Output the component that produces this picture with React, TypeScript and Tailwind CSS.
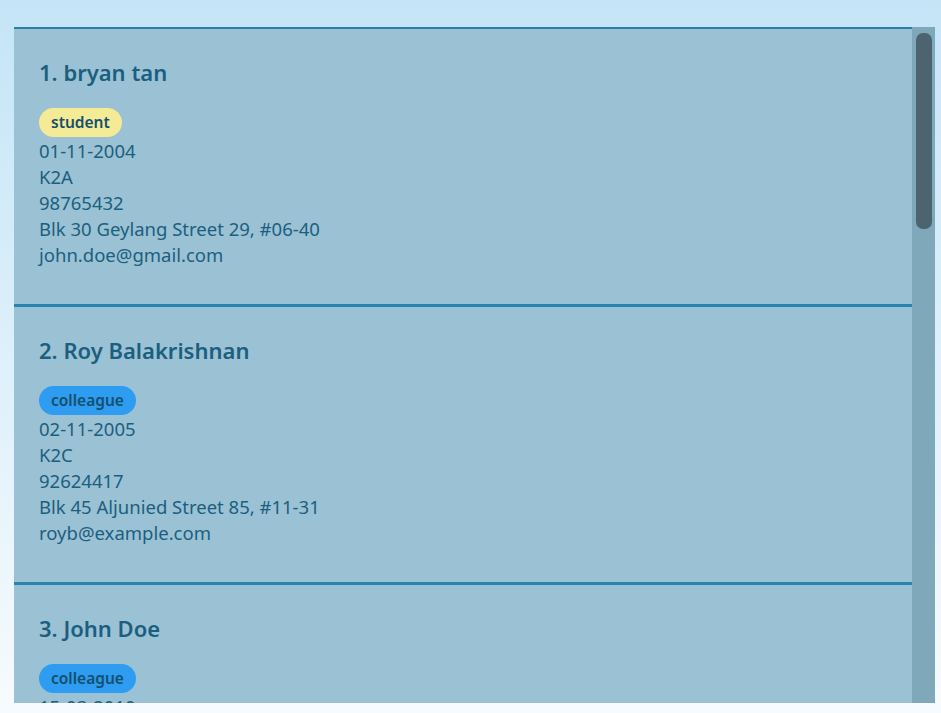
import React from "react";

type Person = {
  name: string;
  tag: string;
  tagClass: string;
  lines: string[];
};

const people: Person[] = [
  {
    name: "1. bryan tan",
    tag: "student",
    tagClass: "bg-[#f5ea95]",
    lines: ["01-11-2004", "K2A", "98765432", "Blk 30 Geylang Street 29, #06-40", "john.doe@gmail.com"],
  },
  {
    name: "2. Roy Balakrishnan",
    tag: "colleague",
    tagClass: "bg-[#2e9cf0]",
    lines: ["02-11-2005", "K2C", "92624417", "Blk 45 Aljunied Street 85, #11-31", "royb@example.com"],
  },
  {
    name: "3. John Doe",
    tag: "colleague",
    tagClass: "bg-[#2e9cf0]",
    lines: ["15-03-2010", "K1B", "87438807", "Blk 12 Clementi Ave 3, #02-15", "johnd@example.com"],
  },
];

function Card({ p }: { p: Person }) {
  return (
    <div className="shrink-0 h-[278px] border-b-[3px] border-[#2a84ae] pl-[25px] pt-[27px] text-[#1b5f80]">
      <div className="text-[22px] leading-[32px] font-semibold">{p.name}</div>
      <div className="mt-[20px] flex">
        <span className={`${p.tagClass} rounded-full h-[29px] px-[12px] flex items-center text-[15.5px] font-semibold text-[#14506e]`}>
          {p.tag}
        </span>
      </div>
      <div className="mt-[1px] text-[18.5px] leading-[26px]">
        {p.lines.map((l, i) => (
          <div key={i}>{l}</div>
        ))}
      </div>
    </div>
  );
}

export default function App() {
  return (
    <div
      className="w-[941px] h-[713px] overflow-hidden bg-gradient-to-b from-[#c4e5f7] to-[#f6fbff] pt-[27px] pl-[14px]"
      style={{ fontFamily: '"Noto Sans", "Open Sans", sans-serif' }}
    >
      <div className="flex w-[921px] h-[676px] bg-[#9bc1d4]">
        <div className="flex-1 flex flex-col overflow-hidden border-t-2 border-[#2a7ea7]">
          {people.map((p, i) => (
            <Card key={i} p={p} />
          ))}
        </div>
        <div className="w-[23px] bg-[#80a8bb] pt-[6px] pl-[4px]">
          <div className="w-[16px] h-[196px] rounded-[7px] bg-[#4c6470]" />
        </div>
      </div>
    </div>
  );
}
